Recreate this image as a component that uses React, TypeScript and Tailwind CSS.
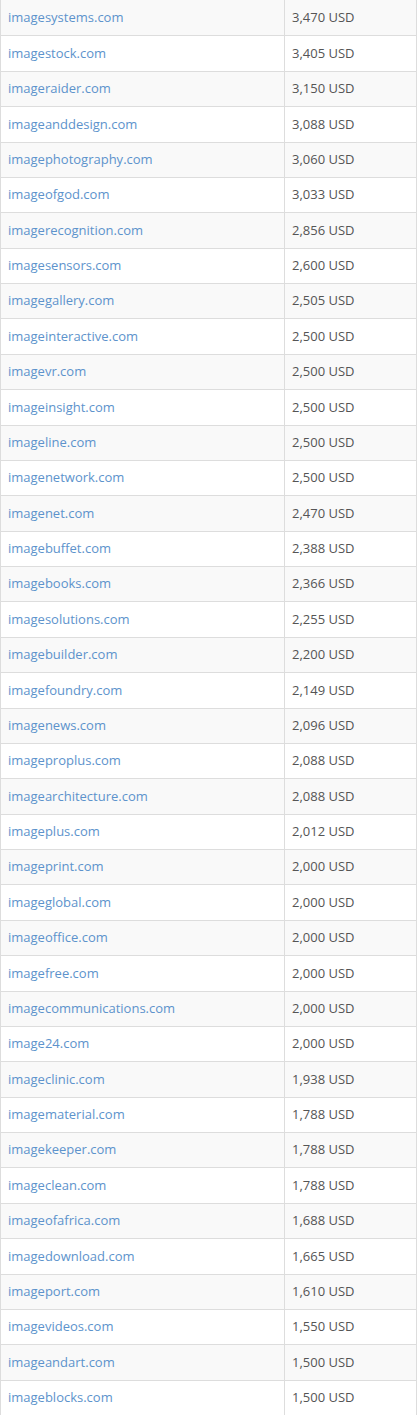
import React from "react"

const rows: [string, string][] = [
  ["imagesystems.com", "3,470"],
  ["imagestock.com", "3,405"],
  ["imageraider.com", "3,150"],
  ["imageanddesign.com", "3,088"],
  ["imagephotography.com", "3,060"],
  ["imageofgod.com", "3,033"],
  ["imagerecognition.com", "2,856"],
  ["imagesensors.com", "2,600"],
  ["imagegallery.com", "2,505"],
  ["imageinteractive.com", "2,500"],
  ["imagevr.com", "2,500"],
  ["imageinsight.com", "2,500"],
  ["imageline.com", "2,500"],
  ["imagenetwork.com", "2,500"],
  ["imagenet.com", "2,470"],
  ["imagebuffet.com", "2,388"],
  ["imagebooks.com", "2,366"],
  ["imagesolutions.com", "2,255"],
  ["imagebuilder.com", "2,200"],
  ["imagefoundry.com", "2,149"],
  ["imagenews.com", "2,096"],
  ["imageproplus.com", "2,088"],
  ["imagearchitecture.com", "2,088"],
  ["imageplus.com", "2,012"],
  ["imageprint.com", "2,000"],
  ["imageglobal.com", "2,000"],
  ["imageoffice.com", "2,000"],
  ["imagefree.com", "2,000"],
  ["imagecommunications.com", "2,000"],
  ["image24.com", "2,000"],
  ["imageclinic.com", "1,938"],
  ["imagematerial.com", "1,788"],
  ["imagekeeper.com", "1,788"],
  ["imageclean.com", "1,788"],
  ["imageofafrica.com", "1,688"],
  ["imagedownload.com", "1,665"],
  ["imageport.com", "1,610"],
  ["imagevideos.com", "1,550"],
  ["imageandart.com", "1,500"],
  ["imageblocks.com", "1,500"],
]

export default function App() {
  return (
    <div className="w-[418px] bg-white font-['Open_Sans',sans-serif] text-[13px]">
      <div className="border-l border-r border-[#dddddd] w-[417px]">
        {rows.map(([name, price], i) => (
          <div
            key={name}
            className={`grid grid-cols-[284px_1fr] h-[35.375px] ${i > 0 ? "border-t border-[#dddddd]" : ""} ${i % 2 === 0 ? "bg-[#f9f9f9]" : "bg-white"}`}
          >
            <div className="flex items-center pl-[7px] border-r border-[#dddddd]">
              <a href="#" className="text-[#5d93cc] no-underline">{name}</a>
            </div>
            <div className="flex items-center pl-[7px] text-[#555555]">{price} USD</div>
          </div>
        ))}
      </div>
    </div>
  )
}
